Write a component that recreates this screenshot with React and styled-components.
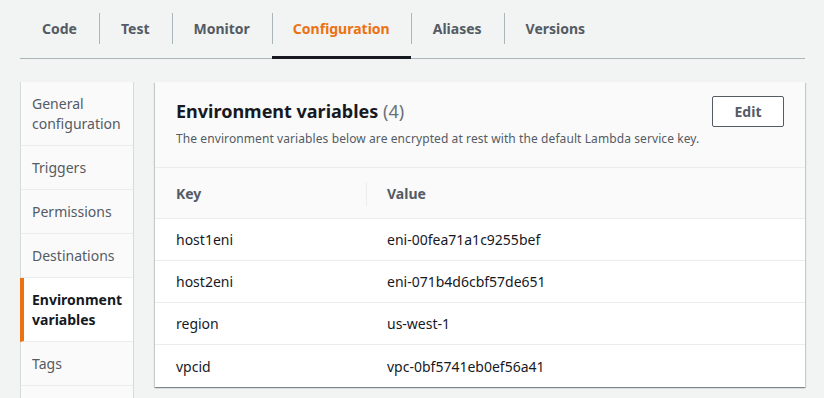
import React from "react";
import styled, { createGlobalStyle } from "styled-components";

const Global = createGlobalStyle`
  html, body { margin: 0; padding: 0; background: #f2f3f3; }
  body { font-family: "Noto Sans", "Open Sans", Arial, sans-serif; color: #16191f; -webkit-font-smoothing: antialiased; }
  * { box-sizing: border-box; }
`;

const Page = styled.div`
  padding: 0 19px 0 20px;
  height: 398px;
  overflow: hidden;
`;

const TabBar = styled.div`
  display: flex;
  height: 59px;
  border-bottom: 1px solid #aab7b8;
`;

const Tab = styled.div`
  position: relative;
  display: flex;
  align-items: center;
  padding: 0 ${(p) => (p.$active ? "21px" : "22px")} 2px;
  font-size: 14px;
  font-weight: 700;
  color: ${(p) => (p.$active ? "#ec7211" : "#545b64")};
  &::before {
    content: "";
    display: ${(p) => (p.$first ? "none" : "block")};
    position: absolute;
    left: 0;
    top: 13px;
    height: 31px;
    width: 1px;
    background: #aab7b8;
  }
  &::after {
    content: "";
    display: ${(p) => (p.$active ? "block" : "none")};
    position: absolute;
    left: 0;
    right: 0;
    bottom: -1px;
    height: 3px;
    background: #16191f;
  }
`;

const Content = styled.div`
  display: flex;
  gap: 21px;
  margin-top: 23px;
  align-items: flex-start;
`;

const SideNav = styled.nav`
  width: 114px;
  flex-shrink: 0;
  border-left: 1px solid #d5dbdb;
  border-right: 1px solid #d5dbdb;
  display: flex;
  flex-direction: column;
`;

const NavItem = styled.div`
  min-height: 44px;
  padding: 12px 8px 11px ${(p) => (p.$active ? "8px" : "11px")};
  border-left: ${(p) => (p.$active ? "4px solid #ec7211" : "0")};
  margin-left: ${(p) => (p.$active ? "-1px" : "0")};
  background: ${(p) => (p.$active ? "#ffffff" : "#fafafa")};
  border-bottom: 1px solid #eaeded;
  font-size: 14px;
  line-height: 20px;
  font-weight: ${(p) => (p.$active ? 700 : 400)};
  color: ${(p) => (p.$active ? "#16191f" : "#545b64")};
`;

const Panel = styled.section`
  flex: 1;
  background: #fff;
  box-shadow: 0 1px 1px 0 rgba(0, 28, 36, 0.3), 1px 1px 1px 0 rgba(0, 28, 36, 0.15),
    -1px 1px 1px 0 rgba(0, 28, 36, 0.15);
`;

const Header = styled.div`
  display: flex;
  justify-content: space-between;
  align-items: flex-start;
  background: #fafafa;
  border-bottom: 1px solid #eaeded;
  padding: 14px 21px 0 21px;
  height: 86px;
`;

const TitleBlock = styled.div`
  display: flex;
  flex-direction: column;
  padding-top: 3px;
`;

const Title = styled.h2`
  margin: 0;
  font-size: 18px;
  line-height: 24px;
  font-weight: 700;
  color: #16191f;
`;

const Count = styled.span`
  font-weight: 400;
  color: #687078;
`;

const Description = styled.p`
  margin: 8px 0 0;
  font-size: 12px;
  line-height: 16px;
  letter-spacing: 0.09px;
  color: #545b64;
`;

const Button = styled.button`
  width: 72px;
  height: 31px;
  border: 1px solid #545b64;
  border-radius: 2px;
  background: #fff;
  font-family: inherit;
  font-size: 14px;
  font-weight: 700;
  color: #545b64;
  padding: 0;
`;

const Table = styled.div`
  display: grid;
  grid-template-columns: 211px 1fr;
`;

const HeadCell = styled.div`
  position: relative;
  height: 51px;
  display: flex;
  align-items: center;
  padding-left: 21px;
  background: #fafafa;
  border-bottom: 1px solid #eaeded;
  font-size: 14px;
  font-weight: 700;
  color: #545b64;
  &::before {
    content: "";
    display: ${(p) => (p.$second ? "block" : "none")};
    position: absolute;
    left: 0;
    top: 14px;
    bottom: 12px;
    width: 1px;
    background: #eaeded;
  }
`;

const Cell = styled.div`
  height: 42px;
  display: flex;
  align-items: center;
  padding-left: 21px;
  border-bottom: ${(p) => (p.$last ? "0" : "1px solid #eaeded")};
  font-size: 14px;
  color: #16191f;
`;

const tabs = ["Code", "Test", "Monitor", "Configuration", "Aliases", "Versions"];
const nav = [
  "General configuration",
  "Triggers",
  "Permissions",
  "Destinations",
  "Environment variables",
  "Tags",
  "",
];
const vars = [
  ["host1eni", "eni-00fea71a1c9255bef"],
  ["host2eni", "eni-071b4d6cbf57de651"],
  ["region", "us-west-1"],
  ["vpcid", "vpc-0bf5741eb0ef56a41"],
];

export default function App() {
  return (
    <>
      <Global />
      <Page>
        <TabBar>
          {tabs.map((t, i) => (
            <Tab key={t} $first={i === 0} $active={t === "Configuration"}>
              {t}
            </Tab>
          ))}
        </TabBar>
        <Content>
          <SideNav>
            {nav.map((n, i) => (
              <NavItem key={i} $active={n === "Environment variables"}>
                {n}
              </NavItem>
            ))}
          </SideNav>
          <Panel>
            <Header>
              <TitleBlock>
                <Title>
                  Environment variables <Count>(4)</Count>
                </Title>
                <Description>
                  The environment variables below are encrypted at rest with the default Lambda service key.
                </Description>
              </TitleBlock>
              <Button>Edit</Button>
            </Header>
            <Table>
              <HeadCell>Key</HeadCell>
              <HeadCell $second>Value</HeadCell>
              {vars.map(([k, v], i) => (
                <React.Fragment key={k}>
                  <Cell $last={i === vars.length - 1}>{k}</Cell>
                  <Cell $last={i === vars.length - 1}>{v}</Cell>
                </React.Fragment>
              ))}
            </Table>
          </Panel>
        </Content>
      </Page>
    </>
  );
}
